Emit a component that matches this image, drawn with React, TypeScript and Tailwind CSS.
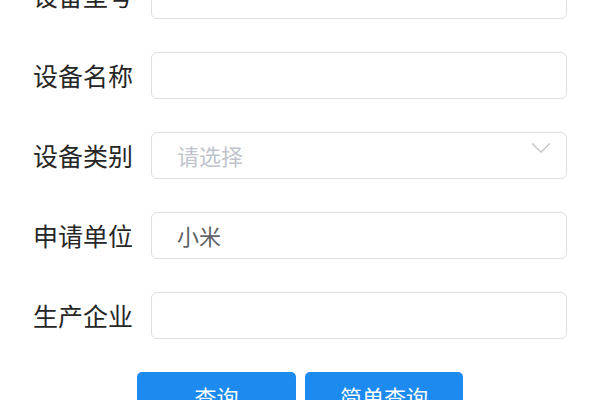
import { ChevronDown } from 'lucide-react';

const font = { fontFamily: '"Noto Sans CJK SC", "Noto Sans", sans-serif' };

function FormRow({ label, children }: { label: string; children: React.ReactNode }) {
  return (
    <div className="flex items-center">
      <label className="w-[118px] shrink-0 text-[25px] leading-none text-[#262626]">{label}</label>
      {children}
    </div>
  );
}

function TextInput({ value }: { value?: string }) {
  return (
    <div className="flex h-[47px] w-[416px] items-center rounded-[6px] border border-[#dcdfe6] bg-white px-[25px] text-[22px] text-[#606266]">
      {value}
    </div>
  );
}

export default function App() {
  return (
    <div className="h-[400px] w-[600px] overflow-hidden bg-white" style={font}>
      <div className="-mt-[28px] flex flex-col gap-[33px] pl-[33px]">
        <FormRow label="设备型号">
          <TextInput />
        </FormRow>
        <FormRow label="设备名称">
          <TextInput />
        </FormRow>
        <FormRow label="设备类别">
          <div className="relative flex h-[47px] w-[416px] items-center rounded-[6px] border border-[#dcdfe6] bg-white px-[25px] text-[22px] text-[#c0c4cc]">
            请选择
            <ChevronDown className="absolute right-[8px] top-[-2px] h-[34px] w-[34px] text-[#c8c9cc]" strokeWidth={1.1} />
          </div>
        </FormRow>
        <FormRow label="申请单位">
          <TextInput value="小米" />
        </FormRow>
        <FormRow label="生产企业">
          <TextInput />
        </FormRow>
      </div>
      <div className="mt-[33px] flex justify-center gap-[9px]">
        <button className="h-[48px] w-[159px] rounded-[5px] bg-[#1c8aee] text-[22px] text-white">查询</button>
        <button className="h-[48px] w-[158px] rounded-[5px] bg-[#1c8aee] text-[22px] text-white">简单查询</button>
      </div>
    </div>
  );
}
